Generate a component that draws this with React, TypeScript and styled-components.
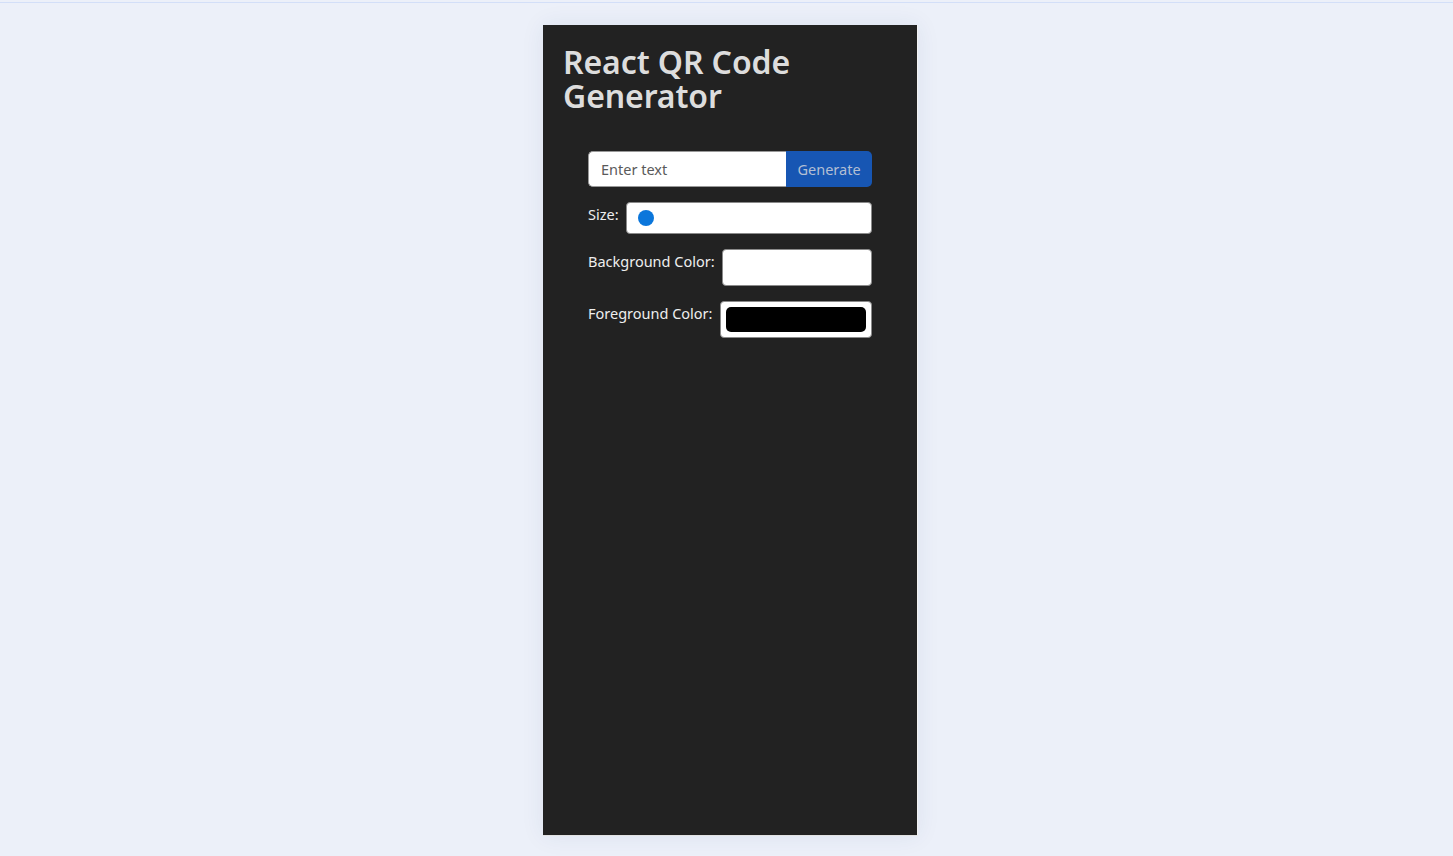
import React, { useState } from 'react';
import styled, { createGlobalStyle } from 'styled-components';

const GlobalStyle = createGlobalStyle`
  html, body {
    margin: 0;
    padding: 0;
    background: #ecf0f9;
    font-family: "Noto Sans", "Open Sans", "Liberation Sans", sans-serif;
  }
  * {
    box-sizing: border-box;
  }
`;

export default function App() {
  const [text, setText] = useState('');
  const [size, setSize] = useState(100);
  const [bgColor, setBgColor] = useState('#ffffff');
  const [fgColor, setFgColor] = useState('#000000');

  return (
    <Page>
      <GlobalStyle />
      <TopRule />
      <Card>
        <Title>React QR Code Generator</Title>

        <Form>
          <InputRow>
            <TextInput
              type="text"
              placeholder="Enter text"
              value={text}
              onChange={(e) => setText(e.target.value)}
            />
            <GenerateButton type="button">Generate</GenerateButton>
          </InputRow>

          <Field>
            <Label>Size:</Label>
            <RangeInput
              type="range"
              min={100}
              max={400}
              value={size}
              onChange={(e) => setSize(Number(e.target.value))}
            />
          </Field>

          <Field>
            <Label>Background Color:</Label>
            <ColorInput type="color" value={bgColor} onChange={(e) => setBgColor(e.target.value)} />
          </Field>

          <Field>
            <Label>Foreground Color:</Label>
            <ColorInput type="color" value={fgColor} onChange={(e) => setFgColor(e.target.value)} />
          </Field>
        </Form>
      </Card>
    </Page>
  );
}

const Page = styled.div`
  min-height: 100vh;
  display: flex;
  flex-direction: column;
  align-items: center;
  padding-left: 8px;
`;

const TopRule = styled.div`
  align-self: stretch;
  height: 3px;
  margin-left: -8px;
  border-bottom: 1px solid #d3dff8;
`;

const Card = styled.div`
  width: 375px;
  height: 811px;
  margin-top: 22px;
  padding: 20px;
  background-color: #222222;
  border-right: 1px solid #f2f2f2;
  border-bottom: 1px solid #e2e2e2;
  box-shadow: 0 0 22px rgba(40, 60, 110, 0.08);
`;

const Title = styled.h1`
  margin: 0;
  font-size: 32px;
  font-weight: 600;
  line-height: 34px;
  letter-spacing: -0.1px;
  color: #dddddd;
`;

const Form = styled.div`
  width: 284px;
  margin: 38px 0 0 25px;
  display: flex;
  flex-direction: column;
  gap: 15px;
`;

const InputRow = styled.div`
  display: flex;
  height: 36px;
`;

const TextInput = styled.input`
  flex: 1;
  min-width: 0;
  height: 100%;
  padding: 0 12px;
  font-family: inherit;
  font-size: 14.5px;
  color: #333;
  background: #ffffff;
  border: 1px solid #999;
  border-right: none;
  border-radius: 5px 0 0 5px;
  outline: none;

  &::placeholder {
    color: #5a5a5a;
  }
`;

const GenerateButton = styled.button`
  width: 86px;
  height: 100%;
  padding: 0;
  font-family: inherit;
  font-size: 14.5px;
  color: #b3bfd3;
  background-color: #1756b3;
  border: none;
  border-radius: 0 5px 5px 0;
  cursor: pointer;
`;

const Field = styled.div`
  display: flex;
  align-items: flex-start;
  gap: 7px;
`;

const Label = styled.label`
  padding-top: 2px;
  font-size: 14.5px;
  line-height: 20px;
  color: #eeeeee;
  white-space: nowrap;
`;

const RangeInput = styled.input`
  -webkit-appearance: none;
  appearance: none;
  flex: 1;
  height: 32px;
  margin: 0;
  padding: 0 11px;
  background: #ffffff;
  border: 1px solid #8a8a8a;
  border-radius: 4px;
  outline: none;

  &::-webkit-slider-runnable-track {
    height: 16px;
    background: transparent;
  }

  &::-webkit-slider-thumb {
    -webkit-appearance: none;
    appearance: none;
    width: 16px;
    height: 16px;
    border-radius: 50%;
    background: #0b76db;
    border: none;
  }
`;

const ColorInput = styled.input`
  -webkit-appearance: none;
  appearance: none;
  flex: 1;
  height: 37px;
  margin: 0;
  padding: 5px;
  background: #ffffff;
  border: 1px solid #8a8a8a;
  border-radius: 4px;
  cursor: pointer;

  &::-webkit-color-swatch-wrapper {
    padding: 0;
  }

  &::-webkit-color-swatch {
    border: none;
    border-radius: 5px;
  }
`;
